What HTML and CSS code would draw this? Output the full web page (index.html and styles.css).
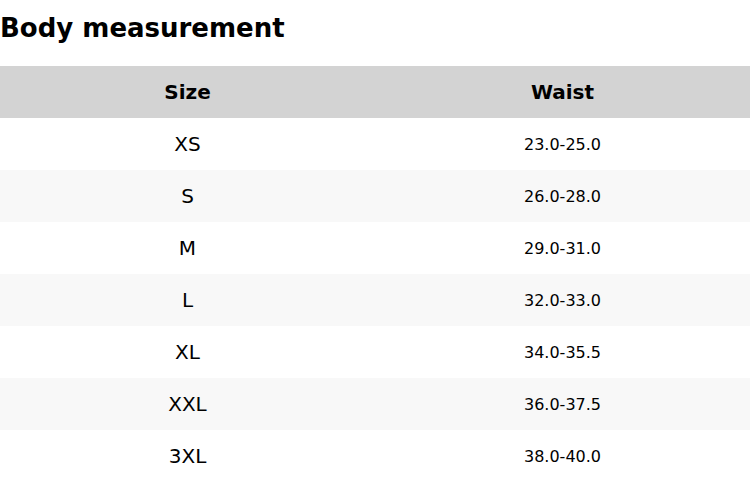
FILE: index.html
```html
<!DOCTYPE html>
<html>
<head>
<meta charset="utf-8">
<link rel="stylesheet" href="styles.css">
</head>
<body>
<h2 class="title">Body measurement</h2>
<table class="size-table">
  <thead>
    <tr><th>Size</th><th>Waist</th></tr>
  </thead>
  <tbody>
    <tr><td class="size">XS</td><td class="val">23.0-25.0</td></tr>
    <tr><td class="size">S</td><td class="val">26.0-28.0</td></tr>
    <tr><td class="size">M</td><td class="val">29.0-31.0</td></tr>
    <tr><td class="size">L</td><td class="val">32.0-33.0</td></tr>
    <tr><td class="size">XL</td><td class="val">34.0-35.5</td></tr>
    <tr><td class="size">XXL</td><td class="val">36.0-37.5</td></tr>
    <tr><td class="size">3XL</td><td class="val">38.0-40.0</td></tr>
  </tbody>
</table>
</body>
</html>
```
FILE: styles.css
```css
html, body {
  margin: 0;
  padding: 0;
  background: #fff;
  font-family: "DejaVu Sans", sans-serif;
  color: #000;
}
.title {
  margin: 0;
  height: 66px;
  line-height: 56px;
  font-size: 26px;
  font-weight: bold;
}
.size-table {
  width: 750px;
  border-collapse: collapse;
  table-layout: fixed;
}
.size-table th,
.size-table td {
  height: 52px;
  padding: 0;
  text-align: center;
  vertical-align: middle;
}
.size-table th {
  background: #d3d3d3;
  font-size: 20px;
  font-weight: bold;
}
.size-table tbody tr:nth-child(even) {
  background: #f8f8f8;
}
.size {
  font-size: 20px;
}
.val {
  font-size: 16px;
}
```
